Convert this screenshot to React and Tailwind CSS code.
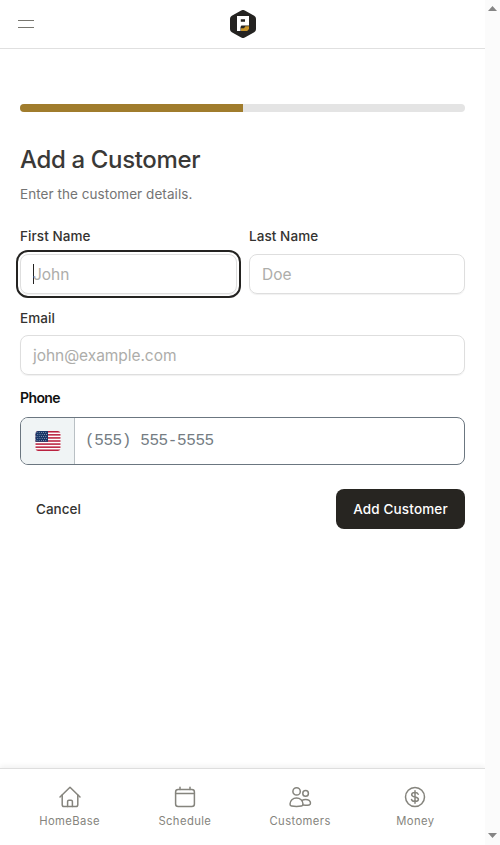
const NAV_ITEMS = [
  { label: "HomeBase", icon: HomeIcon },
  { label: "Schedule", icon: CalendarIcon },
  { label: "Customers", icon: UsersIcon },
  { label: "Money", icon: MoneyIcon },
];

function Icon({ children }) {
  return (
    <svg
      className="size-6"
      viewBox="0 0 24 24"
      fill="none"
      stroke="currentColor"
      strokeWidth="1.5"
      strokeLinecap="round"
      strokeLinejoin="round"
    >
      {children}
    </svg>
  );
}

function HomeIcon() {
  return (
    <Icon>
      <path d="M2 12 12 2.2 22 12" />
      <path d="M4.2 10v9.7c0 1 .7 1.8 1.8 1.8h12c1.1 0 1.8-.8 1.8-1.8V10" />
      <path d="M9.6 21.5v-5c0-.8.5-1.3 1.3-1.3h2.2c.8 0 1.3.5 1.3 1.3v5" />
    </Icon>
  );
}

function CalendarIcon() {
  return (
    <Icon>
      <rect x="2.6" y="4.4" width="18.8" height="17.1" rx="2.5" />
      <path d="M2.6 8.6h18.8M7 2.2v2.2M17 2.2v2.2" />
    </Icon>
  );
}

function UsersIcon() {
  return (
    <Icon>
      <circle cx="8.6" cy="6.4" r="3.7" />
      <circle cx="17.6" cy="8.4" r="2.8" />
      <path d="M2 19c0-3.5 2.9-6 6.5-6s6.5 2.5 6.5 6c0 1.2-.5 1.9-1.6 2.1-3.2.6-6.6.6-9.8 0C2.500 20.900 2 20.200 2 19Z" />
      <path d="M14 15.3c1-.6 2.2-.9 3.6-.9 2.7 0 4.9 1.6 4.9 3.700 0 1-.4 1.600-1.300 1.800-2 .4-4.300.4-6.300.2" />
    </Icon>
  );
}

function MoneyIcon() {
  return (
    <Icon>
      <circle cx="12" cy="12" r="9.5" />
      <path d="M12 5.8v12.4M15.2 9.3C14.7 8.2 13.5 7.6 12 7.6c-1.900 0-3.300.8-3.300 2.200 0 3.200 6.700 1.400 6.700 4.500 0 1.300-1.400 2.200-3.400 2.200-1.800 0-3.100-.7-3.500-2" />
    </Icon>
  );
}

function Logo() {
  return (
    <svg className="h-7 w-[26px]" viewBox="0 0 26 28">
      <path
        fill="#242321"
        d="M11.2.5a3.5 3.5 0 0 1 3.6 0l9.4 5.2A3.5 3.5 0 0 1 26 8.8v10.4a3.5 3.5 0 0 1-1.8 3.1l-9.4 5.2a3.5 3.5 0 0 1-3.6 0l-9.4-5.2A3.5 3.5 0 0 1 0 19.2V8.8a3.5 3.5 0 0 1 1.8-3.1z"
      />
      <path fill="#fff" fillRule="evenodd" d="M7 6h12v9.4h-7.6l-.9 1.600v4H7zm3.800 3.300v2.400h4.200V9.300z" />
      <path fill="#c8952a" d="M11 18.2h3l1.400-1.900H19V19l-1.800 2H11z" />
    </svg>
  );
}

function Flag() {
  return (
    <svg className="h-5 w-[26px]" viewBox="0 0 26 20">
      <defs>
        <clipPath id="flag-shape">
          <rect x="0.5" width="25" height="20" rx="3" />
        </clipPath>
      </defs>
      <g clipPath="url(#flag-shape)">
        <rect width="26" height="20" fill="#fff" />
        {[0, 1, 2, 3, 4, 5, 6].map((stripe) => (
          <rect key={stripe} y={stripe * 3.077} width="26" height="1.538" fill="#b9213f" />
        ))}
        <rect width="13" height="10.8" fill="#193768" />
        {[0, 1, 2, 3, 4].map((row) =>
          [0, 1, 2, 3, 4].map((col) => (
            <circle
              key={`${row}-${col}`}
              cx={2 + col * 2.2 + (row % 2) * 0.8}
              cy={1.4 + row * 2}
              r="0.45"
              fill="#fff"
            />
          ))
        )}
      </g>
    </svg>
  );
}

function Field({ label, placeholder, gap = "mt-2", focused = false }) {
  return (
    <div>
      <div className="text-[13.5px] leading-5 font-medium tracking-[0.07px] text-[#343331]">
        {label}
      </div>
      <div
        className={`${gap} flex h-10 items-center rounded-lg border border-[#dedede] px-3 text-[15.5px] text-[#adadaa] shadow-[0_1px_1px_rgba(0,0,0,0.06)] ${
          focused ? "outline-2 outline-offset-2 outline-[#242321]" : ""
        }`}
      >
        {focused && <span className="-mr-px h-5 w-px bg-[#242321]" />}
        <span className="pt-0.5 tracking-[-0.05px]">{placeholder}</span>
      </div>
    </div>
  );
}

function ScrollBar() {
  return (
    <div className="flex w-[15px] shrink-0 flex-col items-center justify-between bg-[#fbfbfb] pt-[6px] pb-[7px] text-[#858585]">
      <svg className="h-[5px] w-[9px]" viewBox="0 0 9 5">
        <path fill="currentColor" d="M0 5 4.5 0 9 5z" />
      </svg>
      <svg className="h-[5px] w-[9px]" viewBox="0 0 9 5">
        <path fill="currentColor" d="M0 0h9L4.5 5z" />
      </svg>
    </div>
  );
}

export default function App() {
  return (
    <div className="flex h-[845px] w-[500px] bg-white font-['Inter',sans-serif]">
      <div className="flex w-[485px] flex-col">
        <header className="grid h-[49px] grid-cols-[1fr_auto_1fr] items-center border-b border-[#e0e0e0] px-[18px]">
          <div className="flex w-4 flex-col gap-1.5">
            <span className="h-px bg-[#77766f]" />
            <span className="h-px bg-[#77766f]" />
          </div>
          <Logo />
        </header>

        <main className="flex-1 px-5 pt-[55px]">
          <div className="h-2 overflow-hidden rounded-full bg-[#e4e4e4]">
            <div className="h-full w-[223px] bg-[#a07c2c]" />
          </div>

          <h1 className="mt-8 text-2xl leading-8 font-medium tracking-[-0.35px] text-[#3a3937]">
            Add a Customer
          </h1>
          <p className="mt-2 text-[13.5px] leading-5 tracking-[0.06px] text-[#747474]">
            Enter the customer details.
          </p>

          <div className="mt-[22px] grid grid-cols-[217px_216px] gap-3">
            <Field label="First Name" placeholder="John" focused />
            <Field label="Last Name" placeholder="Doe" />
          </div>
          <div className="mt-3.5">
            <Field label="Email" placeholder="john@example.com" gap="mt-[7px]" />
          </div>

          <div className="mt-[13px] text-sm leading-5 font-semibold tracking-[-0.6px] text-[#111]">
            Phone
          </div>
          <div className="mt-[9px] flex h-12 overflow-hidden rounded-lg border border-[#6b7680]">
            <div className="flex w-[54px] items-center justify-center border-r border-[#b9c0c4] bg-[#f0f4f5]">
              <Flag />
            </div>
            <div className="flex items-center pl-[10px] font-['Liberation_Mono',monospace] text-base tracking-[-0.4px] text-[#747c83]">
              (555) 555-5555
            </div>
          </div>

          <div className="mt-6 flex items-center justify-between text-[13.5px] font-medium">
            <button className="px-4 text-[#343331]">Cancel</button>
            <button className="h-10 w-[129px] rounded-lg bg-[#272521] tracking-[0.15px] text-white">
              Add Customer
            </button>
          </div>
        </main>

        <nav className="grid h-[77px] grid-cols-4 border-t border-[#dedede] px-3 pt-4 text-[#85847d] shadow-[0_-2px_5px_rgba(0,0,0,0.06)]">
          {NAV_ITEMS.map((item) => (
            <div key={item.label} className="flex flex-col items-center">
              <item.icon />
              <span className="mt-1 text-[11.25px] leading-4 tracking-[0.4px]">{item.label}</span>
            </div>
          ))}
        </nav>
      </div>
      <ScrollBar />
    </div>
  );
}
